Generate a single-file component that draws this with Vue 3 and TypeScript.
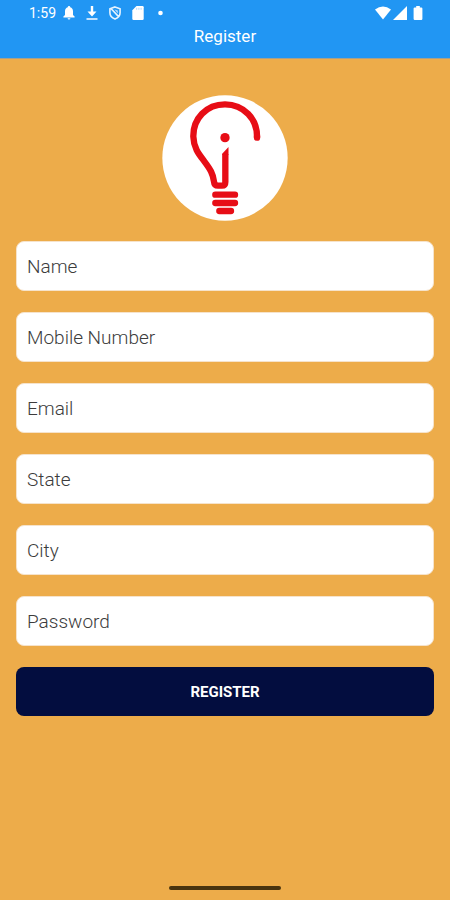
<script setup lang="ts">
import { reactive } from 'vue'

interface Field {
  id: string
  label: string
  type: string
}

const fields: Field[] = [
  { id: 'name', label: 'Name', type: 'text' },
  { id: 'mobile', label: 'Mobile Number', type: 'tel' },
  { id: 'email', label: 'Email', type: 'email' },
  { id: 'state', label: 'State', type: 'text' },
  { id: 'city', label: 'City', type: 'text' },
  { id: 'password', label: 'Password', type: 'password' },
]

const form = reactive<Record<string, string>>({})
</script>

<template>
  <div class="screen">
    <header class="top">
      <div class="status">
        <div class="status-left">
          <span class="time">1:59</span>
          <svg class="icon" viewBox="0 0 12 14" aria-hidden="true">
            <path d="M6 0a1.2 1.2 0 0 1 1.2 1.3C9 1.8 10 3.3 10 5.2V9l1.6 1.6v.8H.4v-.8L2 9V5.200C2 3.300 3 1.800 4.800 1.300A1.200 1.200 0 0 1 6 0zM4.600 12.200h2.800a1.400 1.400 0 0 1-2.800 0z" fill="#fff" />
          </svg>
          <svg class="icon" viewBox="0 0 12 14" aria-hidden="true">
            <path d="M4.800 0h2.400v5.500h3.300L6 10.500 1.500 5.500h3.300z" fill="#fff" />
            <path d="M.5 12h11v2H.5z" fill="#c4e2fc" />
          </svg>
          <svg class="icon" viewBox="0 0 12 14" aria-hidden="true">
            <path d="M6 .9l5.100 1.900v4c0 2.800-2 5.200-5.100 6.300C2.900 12 .9 9.600.9 6.800v-4zM2.200 2.800l7.400 7.800" fill="none" stroke="#e6f3fe" stroke-width="1.600" />
            <path d="M5.500 3.600l3.300.8v3z" fill="#b5dafb" />
          </svg>
          <svg class="icon" viewBox="0 0 12 14" aria-hidden="true">
            <path d="M4.500 0H10.500Q11.700 0 11.700 1.200V12.800Q11.700 14 10.500 14H1.500Q.3 14 .3 12.800V4.200z" fill="#fff" />
            <path d="M4.700 1.800v2M6.900 1.800v2M9.100 1.800v2" stroke="#9dcefa" stroke-width=".8" />
          </svg>
          <svg class="icon" viewBox="0 0 12 14" aria-hidden="true">
            <circle cx="5.500" cy="7" r="2.300" fill="#fff" />
          </svg>
        </div>
        <div class="status-right">
          <svg class="wifi" viewBox="0 0 16 14" aria-hidden="true">
            <path d="M0 3.500Q8-2.500 16 3.500L8 13.500z" fill="#fff" />
          </svg>
          <svg class="signal" viewBox="0 0 14 14" aria-hidden="true">
            <path d="M14 0v14H0z" fill="#fff" />
          </svg>
          <svg class="battery" viewBox="0 0 10 14" aria-hidden="true">
            <path d="M3.200 0h3.600v1.400h1.400Q9.400 1.400 9.400 2.600v10.200Q9.400 14 8.200 14H1.800Q.6 14 .6 12.800V2.600Q.6 1.400 1.800 1.400h1.400z" fill="#fff" />
          </svg>
        </div>
      </div>
      <h1 class="title">Register</h1>
    </header>

    <main class="content">
      <svg class="logo" viewBox="21 21 378 378" role="img" aria-label="Light bulb logo">
        <circle cx="210" cy="210" r="188" fill="#fff" />
        <g fill="none" stroke="#e70d16" stroke-linejoin="round">
          <path
            d="M306 149C308 93 266 49 210 49C154 49 114 92 115 146C116 180 132 199 148 220C166 244 174 257 177 281Q178 293 189 293H201Q211 293 211 282V198"
            stroke-width="19"
          />
          <path d="M306 144V149" stroke-width="19" stroke-linecap="round" />
          <path d="M181 320H240M181 345H240M193 369H228" stroke-width="19" stroke-linecap="round" />
        </g>
        <path d="M201.500 197L220.500 177V200H201.500z" fill="#e70d16" />
        <circle cx="210" cy="149" r="14" fill="#e70d16" />
      </svg>

      <form class="form" @submit.prevent>
        <input
          v-for="field in fields"
          :id="field.id"
          :key="field.id"
          v-model="form[field.id]"
          class="field"
          :type="field.type"
          :placeholder="field.label"
          :aria-label="field.label"
        />
        <button class="submit" type="submit">REGISTER</button>
      </form>
    </main>

    <footer class="nav"><span class="handle"></span></footer>
  </div>
</template>

<style>
body {
  margin: 0;
  background: #edac4a;
}
</style>

<style scoped>
.screen {
  display: flex;
  flex-direction: column;
  min-height: 100vh;
  background: #edac4a;
  font-family: Roboto, 'Liberation Sans', sans-serif;
}

.top {
  box-sizing: border-box;
  height: 59px;
  padding-top: 4px;
  background: #2196f3;
  border-bottom: 1px solid #a6a08c;
  color: #fff;
}

.status {
  display: flex;
  align-items: center;
  justify-content: space-between;
  height: 18px;
  padding: 0 27px 0 29px;
}

.status-left {
  display: flex;
  align-items: center;
  gap: 11px;
}

.time {
  width: 23px;
  font-size: 14px;
  line-height: 18px;
  white-space: nowrap;
}

.icon {
  width: 12px;
  height: 14px;
}

.status-right {
  display: flex;
  align-items: center;
}

.wifi {
  width: 16px;
  height: 14px;
}

.signal {
  width: 14px;
  height: 14px;
  margin: 0 6px 0 2px;
}

.battery {
  width: 10px;
  height: 14px;
}

.title {
  margin: 4px 0 0;
  font-size: 17px;
  font-weight: 400;
  line-height: 20px;
  text-align: center;
}

.content {
  display: flex;
  flex: 1;
  flex-direction: column;
  align-items: center;
  padding: 36px 16px 0;
}

.logo {
  width: 126px;
  height: 126px;
}

.form {
  display: flex;
  flex-direction: column;
  gap: 21px;
  width: 100%;
  margin-top: 20px;
}

.field {
  box-sizing: border-box;
  width: 100%;
  height: 50px;
  padding: 0 10px;
  border: 1px solid #f6e3cb;
  border-radius: 8px;
  background: #fff;
  color: #333;
  font-family: inherit;
  font-size: 19px;
  font-weight: 300;
}

.field::placeholder {
  color: #3c3c3c;
  opacity: 1;
}

.submit {
  height: 49px;
  padding: 0;
  border: 0;
  border-radius: 8px;
  background: #030d3f;
  color: #fff;
  font-family: inherit;
  font-size: 15px;
  font-weight: 700;
}

.nav {
  display: flex;
  justify-content: center;
  padding: 16px 0 10px;
}

.handle {
  width: 25%;
  height: 4px;
  border-radius: 2px;
  background: #49340f;
}
</style>
